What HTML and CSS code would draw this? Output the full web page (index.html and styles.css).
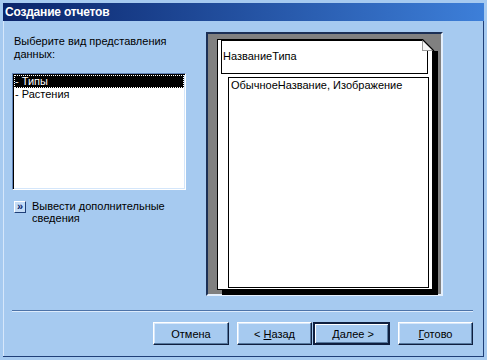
FILE: index.html
```html
<!DOCTYPE html>
<html lang="ru">
<head>
    <meta charset="UTF-8">
    <title>Создание отчетов</title>
    <link rel="stylesheet" href="styles.css">
</head>
<body>
    <div class="window">
        <div class="titlebar">Создание отчетов</div>

        <div class="content">
            <div class="left">
                <p class="prompt">Выберите вид представления<br>данных:</p>
                <div class="listbox">
                    <div class="item selected">- Типы</div>
                    <div class="item">- Растения</div>
                </div>
                <div class="more">
                    <span class="more-btn">»</span>
                    <span class="more-text">Вывести дополнительные<br>сведения</span>
                </div>
            </div>

            <div class="preview">
                <div class="page">
                    <div class="group-header">НазваниеТипа</div>
                    <div class="detail">ОбычноеНазвание, Изображение</div>
                    <svg class="fold" width="17" height="13" viewBox="0 0 17 13">
                        <polygon points="1,0 17,0 17,12 13,12" fill="#808080"/>
                        <polygon points="1,0 1,12 13,12" fill="#f6f6f6"/>
                        <line x1="1.5" y1="0" x2="1.5" y2="12" stroke="#9a9a9a" stroke-width="1"/>
                        <line x1="1" y1="11.5" x2="13" y2="11.5" stroke="#9a9a9a" stroke-width="1"/>
                        <line x1="1" y1="0" x2="13" y2="12" stroke="#000" stroke-width="1.2"/>
                    </svg>
                </div>
            </div>
        </div>

        <div class="separator"></div>

        <div class="buttons">
            <button class="btn btn-cancel">Отмена</button>
            <button class="btn btn-back">&lt; <u>Н</u>азад</button>
            <button class="btn btn-next default">&nbsp;<u>Д</u>алее &gt;</button>
            <button class="btn btn-finish"><u>Г</u>отово</button>
        </div>
    </div>
</body>
</html>
```

FILE: styles.css
```css
body {
    margin: 0;
    background-color: #a6caf0;
    font-family: "Liberation Sans", Arial, sans-serif;
    font-size: 11px;
    color: #000;
}
.window {
    width: 487px;
    height: 360px;
    box-sizing: border-box;
    border: 3px solid #a6caf0;
    background-color: #a6caf0;
    box-shadow: inset -1px -1px 0 #1f3f78, inset 1px 1px 0 #d6e7fb;
}
.titlebar {
    height: 18px;
    line-height: 18px;
    padding-left: 2px;
    background: linear-gradient(to right, #0a246a, #3d7fd9);
    color: #fff;
    font-weight: bold;
    font-size: 12px;
    letter-spacing: -0.2px;
}
.content {
    display: flex;
    padding: 11px 0 0 9px;
}
.left {
    width: 174px;
    margin-right: 20px;
}
.prompt {
    margin: 0;
    padding: 3px 0 0 2px;
    line-height: 13px;
}
.listbox {
    margin-top: 12px;
    height: 117px;
    box-sizing: border-box;
    padding: 1px;
    background-color: #fff;
    border: 1px solid;
    border-color: #5f82b8 #fff #fff #5f82b8;
    box-shadow: inset 1px 1px 0 #000, inset -1px -1px 0 #d4e6fa;
}
.item {
    height: 13px;
    line-height: 13px;
    padding-left: 1px;
}
.item.selected {
    background-color: #000;
    color: #fff;
    outline: 1px dotted #fff;
    outline-offset: -1px;
}
.more {
    display: flex;
    gap: 6px;
    margin-top: 10px;
    padding-left: 2px;
}
.more-btn {
    width: 12px;
    height: 12px;
    box-sizing: border-box;
    margin-top: 1px;
    border: 1px solid;
    border-color: #fff #1f3f78 #1f3f78 #fff;
    background-color: #c4dcf6;
    color: #0a246a;
    font-size: 11px;
    line-height: 9px;
    text-align: center;
    font-weight: bold;
}
.more-text {
    line-height: 12px;
}
.preview {
    width: 237px;
    height: 264px;
    box-sizing: border-box;
    padding: 5px 0 0 9px;
    background-color: #808080;
    border: 2px solid;
    border-color: #1b2f55 #e4effc #e4effc #1b2f55;
}
.page {
    position: relative;
    width: 216px;
    height: 251px;
    box-sizing: border-box;
    background-color: #fff;
    border: 1px solid #000;
    box-shadow: 5px 5px 0 #000;
}
.group-header {
    width: 207px;
    height: 34px;
    box-sizing: border-box;
    margin-left: 3px;
    padding: 9px 0 0 1px;
    border: 1px solid #000;
    line-height: 13px;
}
.detail {
    width: 201px;
    height: 211px;
    box-sizing: border-box;
    margin: 3px 0 0 10px;
    padding: 1px 0 0 2px;
    border: 1px solid #000;
    line-height: 13px;
}
.fold {
    position: absolute;
    top: -1px;
    right: -6px;
    display: block;
}
.separator {
    margin: 14px 11px 0 9px;
    border-top: 1px solid #4d73a8;
    border-bottom: 1px solid #dcebfc;
}
.buttons {
    display: flex;
    margin-top: 10px;
    padding-left: 150px;
}
.btn {
    height: 23px;
    box-sizing: border-box;
    padding: 0;
    background-color: #a6caf0;
    font-family: "Liberation Sans", Arial, sans-serif;
    font-size: 11px;
    color: #000;
    border: 1px solid;
    border-color: #fff #0f1f3f #0f1f3f #fff;
    box-shadow: inset -1px -1px 0 #56799f, inset 1px 1px 0 #d6e7fb;
}
.btn-cancel {
    width: 76px;
}
.btn-back {
    width: 75px;
    margin-left: 8px;
}
.btn-next {
    width: 77px;
    margin-left: 1px;
}
.btn-finish {
    width: 75px;
    margin-left: 8px;
}
.btn.default {
    border: 2px solid #0f1f3f;
    box-shadow: inset 1px 1px 0 #fff, inset -1px -1px 0 #56799f;
}
```
